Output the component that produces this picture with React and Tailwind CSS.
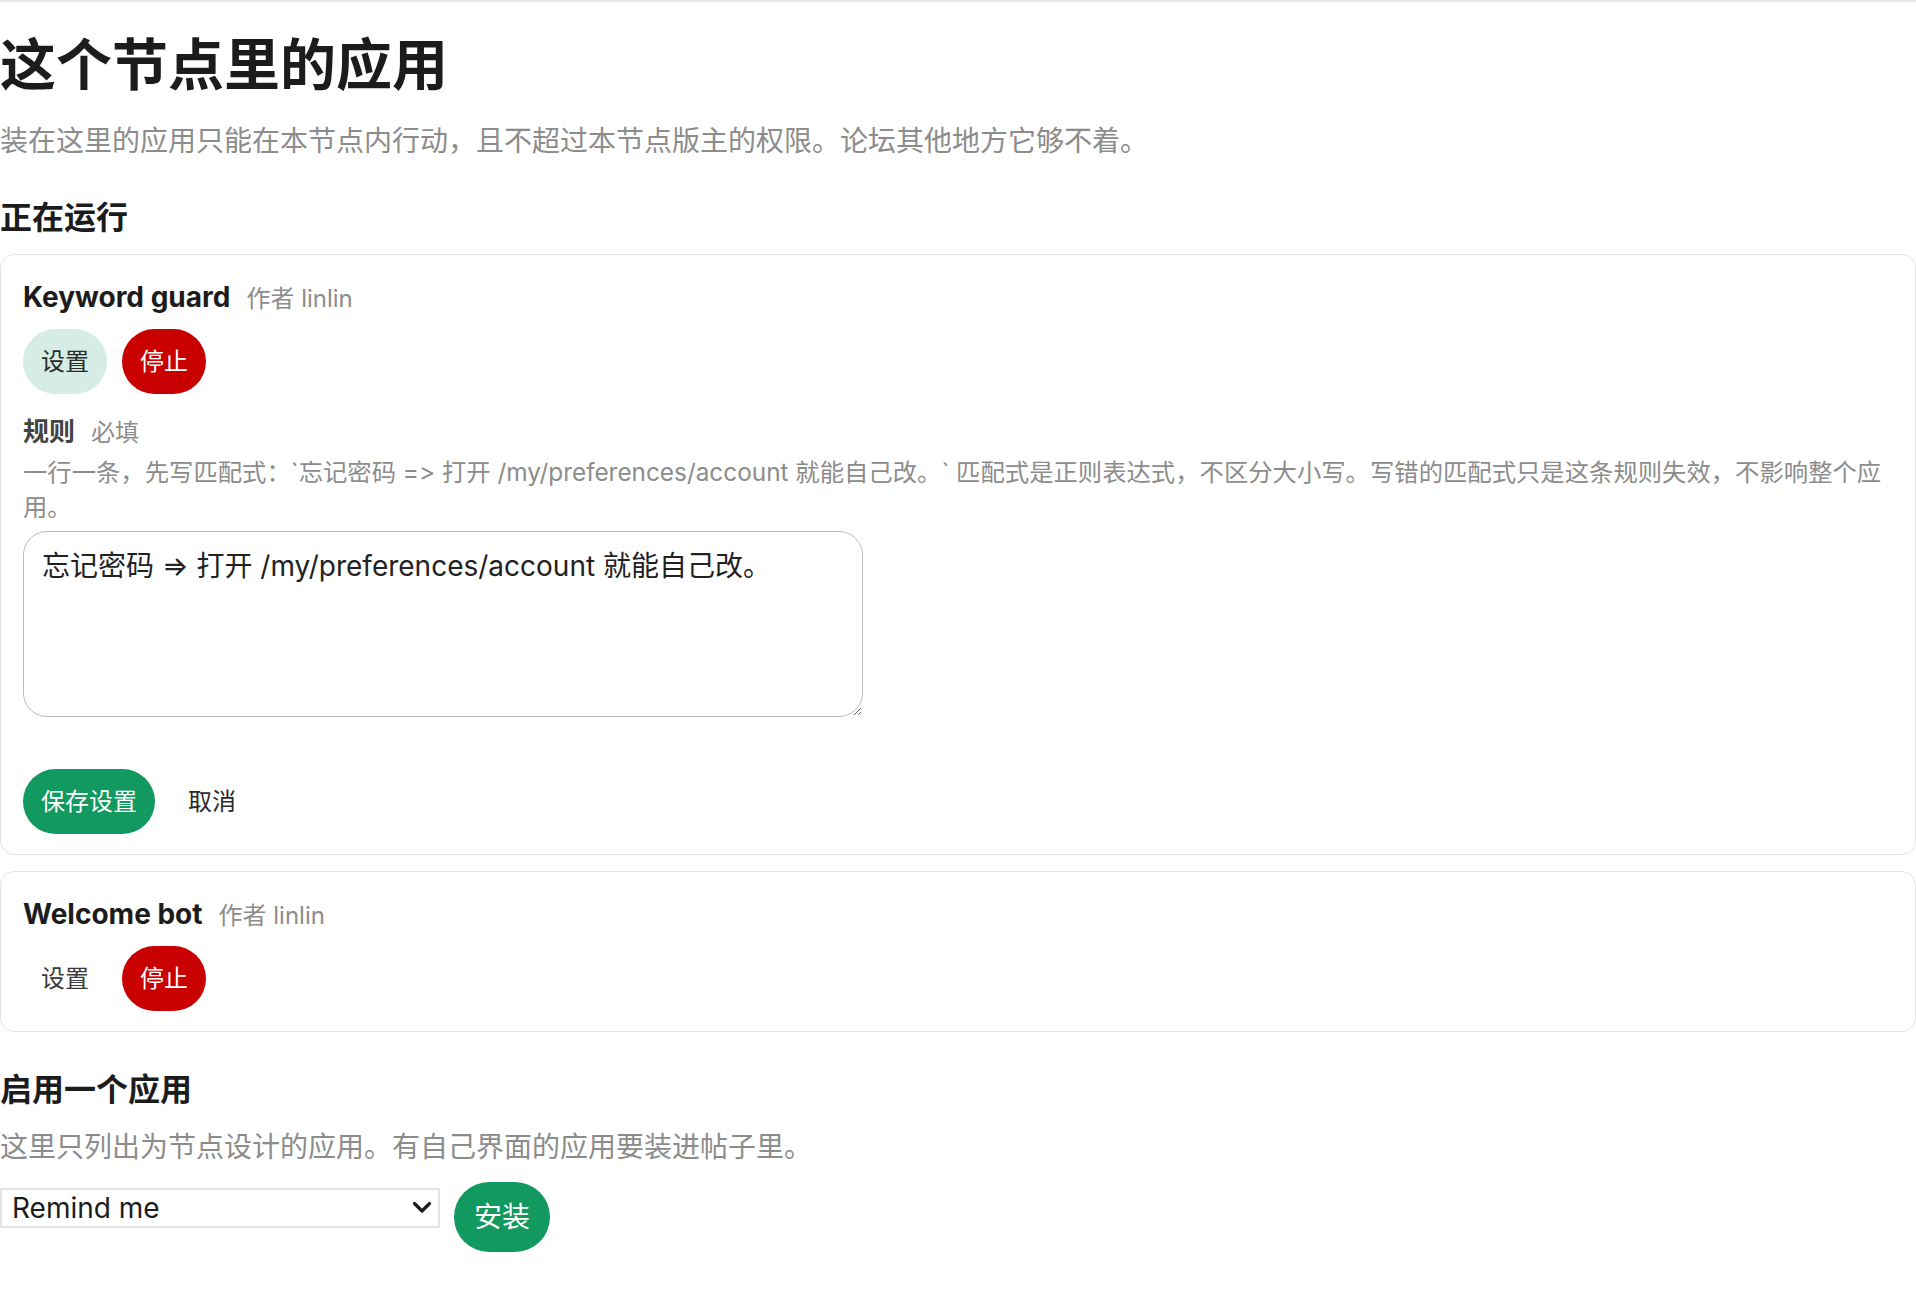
import React from 'react';

const apps = [
  { id: 'keyword-guard', name: 'Keyword guard', author: 'linlin', editing: true },
  { id: 'welcome-bot', name: 'Welcome bot', author: 'linlin', editing: false },
];

function Pill({ className, children }) {
  return (
    <button
      type="button"
      className={`h-[65px] px-[18px] rounded-full text-[24px] leading-none whitespace-nowrap ${className}`}
    >
      {children}
    </button>
  );
}

function AppCard({ app }) {
  return (
    <div className="rounded-[14px] border-[1.5px] border-[#e4e4e4] px-[22px] pt-[22px] pb-[20px]">
      {/* title + author */}
      <div className="mt-[2px] flex items-baseline gap-[16px] leading-[36px]">
        <span className="text-[28px] font-bold text-[#1c1c1c]">{app.name}</span>
        <span className="text-[24px] text-[#8c8c8c]">作者 {app.author}</span>
      </div>

      <div className="mt-[12px] flex gap-[15px]">
        <Pill className={app.editing ? 'bg-[#d6ede5] text-[#2a2a2a]' : 'bg-transparent text-[#3a3a3a]'}>设置</Pill>
        <Pill className="bg-[#c80000] text-white">停止</Pill>
      </div>

      {app.editing && (
        <div>
          <div className="mt-[20px] flex items-baseline gap-[16px] leading-[36px]">
            <span className="text-[26px] font-bold text-[#444]">规则</span>
            <span className="text-[24px] text-[#8c8c8c]">必填</span>
          </div>
          <p className="mt-[4px] text-[24.35px] leading-[35px] text-[#8c8c8c] [font-feature-settings:'calt'_0]">
            一行一条，先写匹配式：`忘记密码 =&gt; 打开 /my/preferences/account 就能自己改。` 匹配式是正则表达式，不区分大小写。写错的匹配式只是这条规则失效，不影响整个应用。
          </p>
          <textarea
            className="mt-[6px] block w-[840px] h-[186px] rounded-[24px] border-[1.5px] border-[#bdbdbd] pt-[14px] px-[18px] text-[28px] leading-[40px] text-[#222] outline-none"
            defaultValue="忘记密码 ⇒ 打开 /my/preferences/account 就能自己改。"
          />
          <div className="mt-[52px] flex gap-[15px]">
            <Pill className="bg-[#11995f] text-white">保存设置</Pill>
            <Pill className="bg-transparent text-[#2a2a2a]">取消</Pill>
          </div>
        </div>
      )}
    </div>
  );
}

export default function App() {
  return (
    <div className="min-h-screen bg-white border-t-2 border-[#e8e8e8] font-[Inter,'Noto_Sans_CJK_SC',sans-serif] text-[#1c1c1c]">
      <h1 className="mt-[31px] text-[56px] leading-[64px] font-bold">这个节点里的应用</h1>
      <p className="mt-[24px] text-[28px] leading-[40px] text-[#8c8c8c]">
        装在这里的应用只能在本节点内行动，且不超过本节点版主的权限。论坛其他地方它够不着。
      </p>

      <h2 className="mt-[35px] text-[32px] leading-[44px] font-bold">正在运行</h2>
      <div className="mt-[14px] flex flex-col gap-[16px]">
        {apps.map(app => (
          <AppCard key={app.id} app={app} />
        ))}
      </div>

      <h2 className="mt-[36px] text-[32px] leading-[44px] font-bold">启用一个应用</h2>
      <p className="mt-[15px] text-[28px] leading-[40px] text-[#8c8c8c]">
        这里只列出为节点设计的应用。有自己界面的应用要装进帖子里。
      </p>

      <div className="mt-[15px] flex items-start gap-[14px]">
        <div className="relative mt-[6px] w-[440px]">
          <select className="block w-full h-[40px] appearance-none border-2 border-[#e4e4e4] bg-white pl-[10px] text-[28px] leading-none text-[#1c1c1c] outline-none">
            <option>Remind me</option>
          </select>
          <svg
            className="pointer-events-none absolute right-[8px] top-[13px]"
            width="20"
            height="13"
            viewBox="0 0 20 13"
            fill="none"
          >
            <path d="M2.5 2.5 L10 10 L17.5 2.5" stroke="#1c1c1c" strokeWidth="3.2" strokeLinecap="round" strokeLinejoin="round" />
          </svg>
        </div>
        <button type="button" className="h-[70px] px-[20px] rounded-full bg-[#11995f] text-white text-[28px] leading-none">
          安装
        </button>
      </div>
    </div>
  );
}
